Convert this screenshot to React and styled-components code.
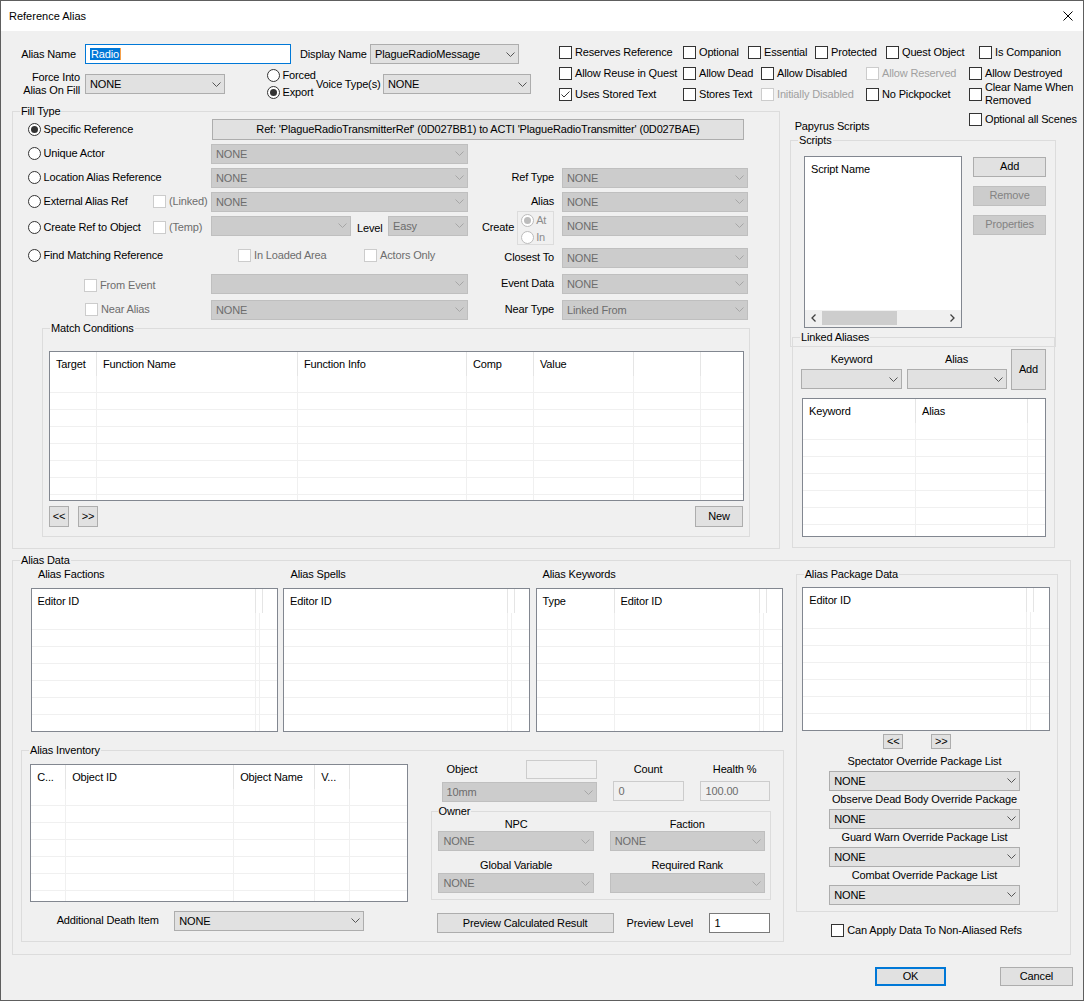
import React from 'react';
import styled, { createGlobalStyle } from 'styled-components';

const px = (v) => (v === undefined || v === null ? '0' : typeof v === 'number' ? `${v}px` : v);

const GlobalStyle = createGlobalStyle`
  html, body { margin: 0; padding: 0; background: #ffffff; }
  #root { width: 1084px; height: 1001px; }
`;

const Window = styled.div`
  width: 1084px;
  height: 1001px;
  box-sizing: border-box;
  border: 1px solid #5e5e5e;
  background: #f0f0f0;
  display: flex;
  flex-direction: column;
  font-family: "Liberation Sans", Arial, "DejaVu Sans", sans-serif;
  font-size: 11px;
  letter-spacing: -0.15px;
  color: #000;
  overflow: hidden;
`;

const TitleBar = styled.div`
  height: 30px;
  flex-shrink: 0;
  background: #ffffff;
  display: flex;
  align-items: center;
  justify-content: space-between;
  padding: 0 10px 0 8px;
`;

const TitleText = styled.span`
  letter-spacing: 0;
`;

const Body = styled.div`
  flex: 1;
  display: flex;
  flex-direction: column;
  padding: 0 12px 0 11px;
`;

const TopSection = styled.div`
  display: flex;
  height: 73.5px;
  flex-shrink: 0;
`;

const TopForm = styled.div`
  width: 519px;
  flex-shrink: 0;
  padding-top: 13px;
  box-sizing: border-box;
`;

const FormRow = styled.div`
  display: flex;
  align-items: center;
  height: ${(p) => p.$h}px;
  margin-top: ${(p) => px(p.$mt)};
`;

const FieldLabel = styled.div`
  width: ${(p) => (p.$w ? `${p.$w}px` : 'auto')};
  margin-left: ${(p) => px(p.$ml)};
  margin-top: ${(p) => px(p.$mt)};
  text-align: ${(p) => p.$align || 'right'};
  white-space: nowrap;
  flex-shrink: 0;
  line-height: 13px;
  color: ${(p) => (p.$disabled ? '#6d6d6d' : '#000')};
`;

const TextInput = styled.div`
  width: ${(p) => p.$w}px;
  height: 20px;
  margin-left: ${(p) => px(p.$ml)};
  box-sizing: border-box;
  flex-shrink: 0;
  border: 1px solid #0078d7;
  background: #ffffff;
  display: flex;
  align-items: center;
  padding-left: 4px;
`;

const Selection = styled.span`
  background: #0078d7;
  color: #ffffff;
  line-height: 12px;
  padding: 0 1px;
`;

const Caret = styled.span`
  width: 1px;
  height: 12px;
  background: #f5a04a;
`;

const TextBox = styled.div`
  width: ${(p) => p.$w}px;
  height: ${(p) => p.$h || 20}px;
  margin-left: ${(p) => px(p.$ml)};
  box-sizing: border-box;
  flex-shrink: 0;
  display: flex;
  align-items: center;
  padding-left: 5px;
  border: 1px solid ${(p) => (p.$disabled ? '#cccccc' : '#7a7a7a')};
  background: ${(p) => (p.$disabled ? '#f0f0f0' : '#ffffff')};
  color: ${(p) => (p.$disabled ? '#6d6d6d' : '#000')};
`;

const SelectBox = styled.div`
  width: ${(p) => p.$w}px;
  height: 20px;
  margin-left: ${(p) => px(p.$ml)};
  box-sizing: border-box;
  flex-shrink: 0;
  display: flex;
  align-items: center;
  padding-left: 4px;
  border: 1px solid ${(p) => (p.$disabled ? '#bfbfbf' : '#adadad')};
  background: ${(p) => (p.$disabled ? '#cccccc' : '#e1e1e1')};
  color: ${(p) => (p.$disabled ? '#6d6d6d' : '#000')};
  white-space: nowrap;
  overflow: hidden;
`;

const ChevronSvg = styled.svg`
  margin-left: auto;
  margin-right: 3px;
  flex-shrink: 0;
`;

const Btn = styled.button`
  font: inherit;
  letter-spacing: inherit;
  padding: 0;
  margin: 0;
  margin-left: ${(p) => px(p.$ml)};
  width: ${(p) => p.$w}px;
  height: ${(p) => p.$h || 20}px;
  box-sizing: border-box;
  flex-shrink: 0;
  border: 1px solid ${(p) => (p.$default ? '#0078d7' : '#adadad')};
  box-shadow: ${(p) => (p.$default ? 'inset 0 0 0 1px #0078d7' : 'none')};
  background: #e1e1e1;
  color: #000;
  display: flex;
  align-items: center;
  justify-content: center;
  white-space: nowrap;
  line-height: 13px;
  &:disabled {
    background: #cccccc;
    border-color: #bfbfbf;
    color: #838383;
  }
`;

const CheckItem = styled.div`
  display: flex;
  align-items: center;
  flex-shrink: 0;
  width: ${(p) => (p.$w ? `${p.$w}px` : 'auto')};
  margin-left: ${(p) => px(p.$ml)};
  margin-top: ${(p) => px(p.$mt)};
  white-space: nowrap;
`;

const Box = styled.span`
  width: 13px;
  height: 13px;
  box-sizing: border-box;
  flex-shrink: 0;
  border: 1px solid ${(p) => (p.$disabled ? '#cccccc' : '#333333')};
  background: #ffffff;
  display: flex;
  align-items: center;
  justify-content: center;
`;

const CheckText = styled.span`
  margin-left: 3px;
  line-height: 13px;
  color: ${(p) => (p.$dim ? '#a0a0a0' : p.$disabled ? '#6d6d6d' : '#000')};
`;

const RadioItem = styled.div`
  display: flex;
  align-items: center;
  white-space: nowrap;
`;

const Circle = styled.span`
  width: 13px;
  height: 13px;
  box-sizing: border-box;
  border-radius: 50%;
  flex-shrink: 0;
  border: 1px solid ${(p) => (p.$disabled ? '#bcbcbc' : '#333333')};
  background: #ffffff;
  display: flex;
  align-items: center;
  justify-content: center;
`;

const Dot = styled.span`
  width: 7px;
  height: 7px;
  border-radius: 50%;
  background: ${(p) => (p.$disabled ? '#bcbcbc' : '#333333')};
`;

const RadioText = styled.span`
  margin-left: 2.5px;
  line-height: 13px;
  color: ${(p) => (p.$disabled ? '#8c8c8c' : '#000')};
`;

const RadioStack = styled.div`
  display: flex;
  flex-direction: column;
  gap: 4px;
  width: ${(p) => p.$w}px;
  margin-left: ${(p) => px(p.$ml)};
  flex-shrink: 0;
`;

const CheckGrid = styled.div`
  margin-left: 28px;
  padding-top: 10.5px;
  display: flex;
  flex-direction: column;
`;

const CheckRow = styled.div`
  display: flex;
  align-items: center;
  height: 21px;
`;

const Middle = styled.div`
  display: flex;
  align-items: flex-start;
  gap: 10px;
  height: 444.5px;
  flex-shrink: 0;
`;

const Group = styled.fieldset`
  margin: 0;
  margin-top: ${(p) => px(p.$mt)};
  margin-left: ${(p) => px(p.$ml)};
  padding: 0;
  border: 1px solid #dcdcdc;
  min-width: 0;
  box-sizing: border-box;
  width: ${(p) => p.$w}px;
  flex-shrink: 0;
`;

const Legend = styled.legend`
  padding: 0 1px;
  margin-left: ${(p) => (p.$ml !== undefined ? p.$ml : 7)}px;
  line-height: 13px;
`;

const FillBody = styled.div`
  padding-bottom: 11px;
`;

const FillGrid = styled.div`
  display: grid;
  grid-template-columns: 15px 56px 69px 58px 257px 14px 72px 8px 186px;
  grid-template-rows: 24px 24px 24px 24px 28px 28px 28px 24px;
`;

const Cell = styled.div`
  grid-column: ${(p) => p.$c};
  grid-row: ${(p) => p.$r};
  display: flex;
  align-items: center;
  justify-content: ${(p) => p.$justify || 'flex-start'};
  align-self: ${(p) => (p.$top !== undefined ? 'start' : 'center')};
  margin-top: ${(p) => px(p.$top)};
  padding-left: ${(p) => px(p.$pl)};
  min-width: 0;
`;

const AtInBox = styled.div`
  width: 37px;
  height: 34px;
  box-sizing: border-box;
  margin-left: 1.7px;
  border: 1px solid #dcdcdc;
  display: flex;
  flex-direction: column;
  gap: 4px;
  padding: 2px 0 0 3px;
  flex-shrink: 0;
`;

const MatchBody = styled.div`
  padding: 16px 0 9px 6px;
`;

const ButtonRow = styled.div`
  display: flex;
  align-items: center;
  width: ${(p) => (p.$w ? `${p.$w}px` : 'auto')};
  margin-top: ${(p) => px(p.$mt)};
`;

/* list view */
const ListBox = styled.div`
  width: ${(p) => p.$w}px;
  height: ${(p) => p.$h}px;
  margin-left: ${(p) => px(p.$ml)};
  margin-top: ${(p) => px(p.$mt)};
  box-sizing: border-box;
  border: 1px solid #828790;
  background: #ffffff;
  overflow: hidden;
  flex-shrink: 0;
`;

const ListHeader = styled.div`
  display: flex;
  height: 24px;
`;

const HeadCell = styled.div`
  width: ${(p) => p.$w}px;
  flex-shrink: 0;
  box-sizing: border-box;
  padding-left: 6px;
  border-right: 1px solid #e5e5e5;
  line-height: 24px;
  white-space: nowrap;
  overflow: hidden;
`;

const ListRow = styled.div`
  display: flex;
  height: 17px;
  box-sizing: border-box;
  border-bottom: 1px solid #f0f0f0;
`;

const BodyCell = styled.div`
  width: ${(p) => p.$w}px;
  flex-shrink: 0;
  box-sizing: border-box;
  border-right: 1px solid #f0f0f0;
`;

/* papyrus column */
const PapyrusCol = styled.div`
  width: 267px;
  flex-shrink: 0;
  display: flex;
  flex-direction: column;
`;

const PapyrusHead = styled.div`
  display: flex;
  align-items: flex-start;
  height: 28px;
`;

const PlainLabel = styled.div`
  line-height: 13px;
  white-space: nowrap;
  margin-left: ${(p) => px(p.$ml)};
  margin-top: ${(p) => px(p.$mt)};
  padding-left: ${(p) => px(p.$pl)};
`;

const ScriptsBody = styled.div`
  display: flex;
  align-items: flex-start;
  padding: 9px 0 18.5px 13px;
`;

const ScriptList = styled.div`
  width: 158.4px;
  height: 172px;
  box-sizing: border-box;
  border: 1px solid #828790;
  background: #ffffff;
  display: flex;
  flex-direction: column;
`;

const ScriptHeader = styled.div`
  height: 24px;
  line-height: 24px;
  padding-left: 6px;
`;

const Spacer = styled.div`
  flex: 1;
`;

const HScroll = styled.div`
  height: 17px;
  background: #f0f0f0;
  display: flex;
  align-items: center;
`;

const ScrollArrow = styled.div`
  width: 17px;
  height: 17px;
  display: flex;
  align-items: center;
  justify-content: center;
  flex-shrink: 0;
`;

const Thumb = styled.div`
  width: 75px;
  height: 14px;
  background: #cdcdcd;
  flex-shrink: 0;
`;

const ScriptButtons = styled.div`
  display: flex;
  flex-direction: column;
  gap: 9px;
  margin-left: 11px;
  margin-top: 1.4px;
`;

const LinkedBody = styled.div`
  padding: 5.8px 0 10px 8px;
`;

const LinkedGrid = styled.div`
  display: grid;
  grid-template-columns: 101px 100px 35px;
  grid-template-rows: 20px 21px;
  column-gap: 4.5px;
`;

/* alias data */
const AliasDataBody = styled.div`
  display: flex;
  align-items: flex-start;
  padding: 0 0 12px 8px;
`;

const AliasLeft = styled.div`
  width: 764px;
  flex-shrink: 0;
  display: flex;
  flex-direction: column;
`;

const ListsRow = styled.div`
  display: flex;
  gap: 5.5px;
  margin-left: 9.6px;
`;

const ListCol = styled.div`
  display: flex;
  flex-direction: column;
  gap: 6.5px;
  padding-top: 1.5px;
`;

const InvBody = styled.div`
  display: flex;
  align-items: flex-start;
  padding: 2.5px 0 7.8px 8.2px;
`;

const InvLeft = styled.div`
  display: flex;
  flex-direction: column;
  padding-top: 5px;
  width: 377.6px;
  flex-shrink: 0;
`;

const DeathRow = styled.div`
  display: flex;
  align-items: center;
  height: 20px;
  margin-top: 9px;
`;

const InvRight = styled.div`
  display: flex;
  flex-direction: column;
  margin-left: 22.8px;
  width: 340.4px;
  flex-shrink: 0;
`;

const ObjGrid = styled.div`
  display: grid;
  grid-template-columns: 155px 71px 70px;
  grid-template-rows: 20px 21px;
  column-gap: 16px;
  row-gap: 2px;
  padding-left: 11px;
`;

const OwnerGrid = styled.div`
  display: grid;
  grid-template-columns: 155.6px 155px;
  grid-template-rows: 13px 20px 22px 20px;
  column-gap: 15.8px;
  padding: 0 0 6px 6.8px;
`;

const PreviewRow = styled.div`
  display: flex;
  align-items: center;
  height: 20px;
  margin-top: 13px;
`;

const AliasRight = styled.div`
  display: flex;
  flex-direction: column;
  margin-left: 10.7px;
  margin-top: 1px;
  width: 262.6px;
  flex-shrink: 0;
`;

const PackageBody = styled.div`
  padding: 6.8px 0 6.2px 5.6px;
`;

const OverrideCol = styled.div`
  margin-left: 27px;
  margin-top: 6px;
  width: 190.4px;
  display: flex;
  flex-direction: column;
  align-items: center;
  gap: 2.5px;
`;

const OverridePair = styled.div`
  display: flex;
  flex-direction: column;
  align-items: center;
  gap: 2.5px;
`;

const Footer = styled.div`
  display: flex;
  justify-content: flex-end;
  margin-top: 11.7px;
  margin-right: -1.7px;
`;

/* ---------- small building blocks ---------- */

function Chevron({ disabled }) {
  return (
    <ChevronSvg width="9" height="5" viewBox="0 0 9 5">
      <polyline
        points="0.5,0.5 4.5,4.5 8.5,0.5"
        fill="none"
        stroke={disabled ? '#a6a6a6' : '#555555'}
        strokeWidth="1"
      />
    </ChevronSvg>
  );
}

function Select({ w, ml, value = '', disabled }) {
  return (
    <SelectBox $w={w} $ml={ml} $disabled={disabled}>
      <span>{value}</span>
      <Chevron disabled={disabled} />
    </SelectBox>
  );
}

function Check({ label, checked, disabled, dim, w, ml, mt }) {
  return (
    <CheckItem $w={w} $ml={ml} $mt={mt}>
      <Box $disabled={disabled || dim}>
        {checked && (
          <svg width="11" height="11" viewBox="0 0 11 11">
            <polyline points="1.5,5.5 4,8 9.5,2.5" fill="none" stroke="#333333" strokeWidth="1" />
          </svg>
        )}
      </Box>
      <CheckText $disabled={disabled} $dim={dim}>
        {label}
      </CheckText>
    </CheckItem>
  );
}

function Radio({ label, checked, disabled }) {
  return (
    <RadioItem>
      <Circle $disabled={disabled}>{checked && <Dot $disabled={disabled} />}</Circle>
      <RadioText $disabled={disabled}>{label}</RadioText>
    </RadioItem>
  );
}

function ListView({ w, h, cols, ml, mt }) {
  const rows = Math.ceil((h - 2 - 24) / 17);
  return (
    <ListBox $w={w} $h={h} $ml={ml} $mt={mt}>
      <ListHeader>
        {cols.map((c, i) => (
          <HeadCell key={i} $w={c.w}>
            {c.label || ''}
          </HeadCell>
        ))}
      </ListHeader>
      {Array.from({ length: rows }).map((_, r) => (
        <ListRow key={r}>
          {cols.map((c, i) => (
            <BodyCell key={i} $w={c.w} />
          ))}
        </ListRow>
      ))}
    </ListBox>
  );
}

function CloseIcon() {
  return (
    <svg width="10" height="10" viewBox="0 0 10 10">
      <line x1="0.5" y1="0.5" x2="9.5" y2="9.5" stroke="#000" strokeWidth="1" />
      <line x1="9.5" y1="0.5" x2="0.5" y2="9.5" stroke="#000" strokeWidth="1" />
    </svg>
  );
}

const editorCols = [{ label: 'Editor ID', w: 224 }, { w: 4 }];

const overrides = [
  'Spectator Override Package List',
  'Observe Dead Body Override Package',
  'Guard Warn Override Package List',
  'Combat Override Package List',
];

export default function App() {
  return (
    <>
      <GlobalStyle />
      <Window>
        <TitleBar>
          <TitleText>Reference Alias</TitleText>
          <CloseIcon />
        </TitleBar>
        <Body>
          <TopSection>
            <TopForm>
              <FormRow $h={20}>
                <FieldLabel $w={64}>Alias Name</FieldLabel>
                <TextInput $w={206} $ml={9}>
                  <Selection>Radio</Selection>
                  <Caret />
                </TextInput>
                <FieldLabel $w={65} $ml={9} $align="left">
                  Display Name
                </FieldLabel>
                <Select w={149} ml={5} value="PlagueRadioMessage" />
              </FormRow>
              <FormRow $h={30} $mt={5}>
                <FieldLabel $w={68}>
                  Force Into
                  <br />
                  Alias On Fill
                </FieldLabel>
                <Select w={140} ml={5} value="NONE" />
                <RadioStack $ml={42} $w={49}>
                  <Radio label="Forced" />
                  <Radio label="Export" checked />
                </RadioStack>
                <FieldLabel $w={65} $align="left">
                  Voice Type(s)
                </FieldLabel>
                <Select w={148} ml={2} value="NONE" />
              </FormRow>
            </TopForm>
            <CheckGrid>
              <CheckRow>
                <Check w={124} label="Reserves Reference" />
                <Check w={65} label="Optional" />
                <Check w={67} label="Essential" />
                <Check w={71} label="Protected" />
                <Check w={93} label="Quest Object" />
                <Check label="Is Companion" />
              </CheckRow>
              <CheckRow>
                <Check w={124} label="Allow Reuse in Quest" />
                <Check w={78} label="Allow Dead" />
                <Check w={105} label="Allow Disabled" />
                <Check w={103} label="Allow Reserved" dim />
                <Check label="Allow Destroyed" />
              </CheckRow>
              <CheckRow>
                <Check w={124} label="Uses Stored Text" checked />
                <Check w={78} label="Stores Text" />
                <Check w={105} label="Initially Disabled" dim />
                <Check w={103} label="No Pickpocket" />
                <Check
                  label={
                    <>
                      Clear Name When
                      <br />
                      Removed
                    </>
                  }
                />
              </CheckRow>
            </CheckGrid>
          </TopSection>

          <Middle>
            <Group $w={768}>
              <Legend>Fill Type</Legend>
              <FillBody>
                <FillGrid>
                  <Cell $c="2 / 5" $r={1}>
                    <Radio label="Specific Reference" checked />
                  </Cell>
                  <Cell $c="5 / 10" $r={1} $pl={1}>
                    <Btn $w={532} $h={21}>
                      Ref: 'PlagueRadioTransmitterRef' (0D027BB1) to ACTI 'PlagueRadioTransmitter' (0D027BAE)
                    </Btn>
                  </Cell>

                  <Cell $c="2 / 5" $r={2}>
                    <Radio label="Unique Actor" />
                  </Cell>
                  <Cell $c="5" $r={2}>
                    <Select w={257} value="NONE" disabled />
                  </Cell>

                  <Cell $c="2 / 5" $r={3}>
                    <Radio label="Location Alias Reference" />
                  </Cell>
                  <Cell $c="5" $r={3}>
                    <Select w={257} value="NONE" disabled />
                  </Cell>
                  <Cell $c="7" $r={3} $justify="flex-end">
                    <FieldLabel>Ref Type</FieldLabel>
                  </Cell>
                  <Cell $c="9" $r={3}>
                    <Select w={186} value="NONE" disabled />
                  </Cell>

                  <Cell $c="2 / 4" $r={4}>
                    <Radio label="External Alias Ref" />
                  </Cell>
                  <Cell $c="4" $r={4}>
                    <Check label="(Linked)" disabled />
                  </Cell>
                  <Cell $c="5" $r={4}>
                    <Select w={257} value="NONE" disabled />
                  </Cell>
                  <Cell $c="7" $r={4} $justify="flex-end">
                    <FieldLabel>Alias</FieldLabel>
                  </Cell>
                  <Cell $c="9" $r={4}>
                    <Select w={186} value="NONE" disabled />
                  </Cell>

                  <Cell $c="2 / 4" $r={5}>
                    <Radio label="Create Ref to Object" />
                  </Cell>
                  <Cell $c="4" $r={5}>
                    <Check label="(Temp)" disabled />
                  </Cell>
                  <Cell $c="5" $r={5} $top={2}>
                    <Select w={140} disabled />
                    <FieldLabel $ml={6} $mt={5}>
                      Level
                    </FieldLabel>
                    <Select w={80} ml="auto" value="Easy" disabled />
                  </Cell>
                  <Cell $c="7 / 9" $r={5}>
                    <FieldLabel $w={33} $align="left">
                      Create
                    </FieldLabel>
                    <AtInBox>
                      <Radio label="At" checked disabled />
                      <Radio label="In" disabled />
                    </AtInBox>
                  </Cell>
                  <Cell $c="9" $r={5} $top={2}>
                    <Select w={186} value="NONE" disabled />
                  </Cell>

                  <Cell $c="2 / 5" $r={6}>
                    <Radio label="Find Matching Reference" />
                  </Cell>
                  <Cell $c="5" $r={6} $pl={27}>
                    <Check w={126} label="In Loaded Area" disabled />
                    <Check label="Actors Only" disabled />
                  </Cell>
                  <Cell $c="7" $r={6} $justify="flex-end" $top={9}>
                    <FieldLabel>Closest To</FieldLabel>
                  </Cell>
                  <Cell $c="9" $r={6} $top={6}>
                    <Select w={186} value="NONE" disabled />
                  </Cell>

                  <Cell $c="3 / 5" $r={7} $top={9}>
                    <Check label="From Event" disabled />
                  </Cell>
                  <Cell $c="5" $r={7}>
                    <Select w={257} disabled />
                  </Cell>
                  <Cell $c="7" $r={7} $justify="flex-end">
                    <FieldLabel>Event Data</FieldLabel>
                  </Cell>
                  <Cell $c="9" $r={7}>
                    <Select w={186} value="NONE" disabled />
                  </Cell>

                  <Cell $c="3 / 5" $r={8} $pl={1}>
                    <Check label="Near Alias" disabled />
                  </Cell>
                  <Cell $c="5" $r={8}>
                    <Select w={257} value="NONE" disabled />
                  </Cell>
                  <Cell $c="7" $r={8} $justify="flex-end">
                    <FieldLabel>Near Type</FieldLabel>
                  </Cell>
                  <Cell $c="9" $r={8}>
                    <Select w={186} value="Linked From" disabled />
                  </Cell>
                </FillGrid>

                <Group $w={708} $ml={29}>
                  <Legend>Match Conditions</Legend>
                  <MatchBody>
                    <ListView
                      w={695}
                      h={150}
                      cols={[
                        { label: 'Target', w: 47 },
                        { label: 'Function Name', w: 201 },
                        { label: 'Function Info', w: 169 },
                        { label: 'Comp', w: 67 },
                        { label: 'Value', w: 100 },
                        { label: '', w: 67 },
                      ]}
                    />
                    <ButtonRow $w={694} $mt={5}>
                      <Btn $w={20} $h={21}>&lt;&lt;</Btn>
                      <Btn $w={20} $h={21} $ml={9}>&gt;&gt;</Btn>
                      <Btn $w={48} $h={21} $ml="auto">New</Btn>
                    </ButtonRow>
                  </MatchBody>
                </Group>
              </FillBody>
            </Group>

            <PapyrusCol>
              <PapyrusHead>
                <PlainLabel $ml={4.7} $mt={15}>
                  Papyrus Scripts
                </PlainLabel>
                <Check w={88} ml="auto" mt={8} label="Optional all Scenes" />
              </PapyrusHead>
              <Group $w={266.4} $mt={1}>
                <Legend>Scripts</Legend>
                <ScriptsBody>
                  <ScriptList>
                    <ScriptHeader>Script Name</ScriptHeader>
                    <Spacer />
                    <HScroll>
                      <ScrollArrow>
                        <svg width="5" height="8" viewBox="0 0 5 8">
                          <polyline points="4.5,0.5 1,4 4.5,7.5" fill="none" stroke="#404040" strokeWidth="1.3" />
                        </svg>
                      </ScrollArrow>
                      <Thumb />
                      <Spacer />
                      <ScrollArrow>
                        <svg width="5" height="8" viewBox="0 0 5 8">
                          <polyline points="0.5,0.5 4,4 0.5,7.5" fill="none" stroke="#404040" strokeWidth="1.3" />
                        </svg>
                      </ScrollArrow>
                    </HScroll>
                  </ScriptList>
                  <ScriptButtons>
                    <Btn $w={72.4}>Add</Btn>
                    <Btn $w={72.4} disabled>
                      Remove
                    </Btn>
                    <Btn $w={72.4} disabled>
                      Properties
                    </Btn>
                  </ScriptButtons>
                </ScriptsBody>
              </Group>
              <Group $w={263.4} $mt={-16.5} $ml={2}>
                <Legend>Linked Aliases</Legend>
                <LinkedBody>
                  <LinkedGrid>
                    <Cell $c="1" $r={1} $justify="center">
                      <FieldLabel>Keyword</FieldLabel>
                    </Cell>
                    <Cell $c="2" $r={1} $justify="center">
                      <FieldLabel>Alias</FieldLabel>
                    </Cell>
                    <Cell $c="1" $r={2} $top={0}>
                      <Select w={101} />
                    </Cell>
                    <Cell $c="2" $r={2} $top={0}>
                      <Select w={100} />
                    </Cell>
                    <Cell $c="3" $r="1 / 3">
                      <Btn $w={35} $h={41}>
                        Add
                      </Btn>
                    </Cell>
                  </LinkedGrid>
                  <ListView
                    w={244.4}
                    h={139}
                    ml={1}
                    mt={8}
                    cols={[
                      { label: 'Keyword', w: 113 },
                      { label: 'Alias', w: 112 },
                    ]}
                  />
                </LinkedBody>
              </Group>
            </PapyrusCol>
          </Middle>

          <Group $w={1059} $mt={4.5}>
            <Legend>Alias Data</Legend>
            <AliasDataBody>
              <AliasLeft>
                <ListsRow>
                  <ListCol>
                    <PlainLabel $pl={7.5}>Alias Factions</PlainLabel>
                    <ListView w={247} h={144.5} cols={editorCols} />
                  </ListCol>
                  <ListCol>
                    <PlainLabel $pl={7.5}>Alias Spells</PlainLabel>
                    <ListView w={247} h={144.5} cols={editorCols} />
                  </ListCol>
                  <ListCol>
                    <PlainLabel $pl={7}>Alias Keywords</PlainLabel>
                    <ListView
                      w={247}
                      h={144.5}
                      cols={[
                        { label: 'Type', w: 78 },
                        { label: 'Editor ID', w: 145 },
                        { w: 4 },
                      ]}
                    />
                  </ListCol>
                </ListsRow>

                <Group $w={763.3} $mt={11.5}>
                  <Legend>Alias Inventory</Legend>
                  <InvBody>
                    <InvLeft>
                      <ListView
                        w={377.6}
                        h={137.7}
                        cols={[
                          { label: 'C...', w: 35 },
                          { label: 'Object ID', w: 168 },
                          { label: 'Object Name', w: 81 },
                          { label: 'V...', w: 35 },
                        ]}
                      />
                      <DeathRow>
                        <FieldLabel $ml={26.5} $w={104} $align="left">
                          Additional Death Item
                        </FieldLabel>
                        <Select w={190} ml={13.5} value="NONE" />
                      </DeathRow>
                    </InvLeft>
                    <InvRight>
                      <ObjGrid>
                        <Cell $c="1" $r={1}>
                          <FieldLabel $ml={5}>Object</FieldLabel>
                          <TextBox $w={70.4} $h={19} $ml="auto" $disabled />
                        </Cell>
                        <Cell $c="2" $r={1} $justify="center">
                          <FieldLabel>Count</FieldLabel>
                        </Cell>
                        <Cell $c="3" $r={1} $justify="center">
                          <FieldLabel>Health %</FieldLabel>
                        </Cell>
                        <Cell $c="1" $r={2} $top={1}>
                          <Select w={155} value="10mm" disabled />
                        </Cell>
                        <Cell $c="2" $r={2} $top={0}>
                          <TextBox $w={71} $disabled>
                            0
                          </TextBox>
                        </Cell>
                        <Cell $c="3" $r={2} $top={0}>
                          <TextBox $w={70} $disabled>
                            100.00
                          </TextBox>
                        </Cell>
                      </ObjGrid>
                      <Group $w={340.4} $mt={3.2}>
                        <Legend $ml={6}>Owner</Legend>
                        <OwnerGrid>
                          <Cell $c="1" $r={1} $justify="center">
                            <FieldLabel>NPC</FieldLabel>
                          </Cell>
                          <Cell $c="2" $r={1} $justify="center">
                            <FieldLabel>Faction</FieldLabel>
                          </Cell>
                          <Cell $c="1" $r={2}>
                            <Select w={155.6} value="NONE" disabled />
                          </Cell>
                          <Cell $c="2" $r={2}>
                            <Select w={155} value="NONE" disabled />
                          </Cell>
                          <Cell $c="1" $r={3} $justify="center" $top={7.5}>
                            <FieldLabel>Global Variable</FieldLabel>
                          </Cell>
                          <Cell $c="2" $r={3} $justify="center" $top={7.5}>
                            <FieldLabel>Required Rank</FieldLabel>
                          </Cell>
                          <Cell $c="1" $r={4}>
                            <Select w={155.6} value="NONE" disabled />
                          </Cell>
                          <Cell $c="2" $r={4}>
                            <Select w={155} disabled />
                          </Cell>
                        </OwnerGrid>
                      </Group>
                      <PreviewRow>
                        <Btn $w={177} $ml={6}>
                          Preview Calculated Result
                        </Btn>
                        <FieldLabel $ml={13} $w={67} $align="left">
                          Preview Level
                        </FieldLabel>
                        <TextBox $w={61.4} $ml={15}>
                          1
                        </TextBox>
                      </PreviewRow>
                    </InvRight>
                  </InvBody>
                </Group>
              </AliasLeft>

              <AliasRight>
                <Group $w={262.6}>
                  <Legend>Alias Package Data</Legend>
                  <PackageBody>
                    <ListView w={247.4} h={144} cols={editorCols} />
                    <ButtonRow $mt={3}>
                      <Btn $w={20} $h={15} $ml={81}>
                        &lt;&lt;
                      </Btn>
                      <Btn $w={20} $h={15} $ml={28}>
                        &gt;&gt;
                      </Btn>
                    </ButtonRow>
                    <OverrideCol>
                      {overrides.map((o) => (
                        <OverridePair key={o}>
                          <PlainLabel>{o}</PlainLabel>
                          <Select w={190.4} value="NONE" />
                        </OverridePair>
                      ))}
                    </OverrideCol>
                  </PackageBody>
                </Group>
                <Check ml={35.6} mt={12.3} label="Can Apply Data To Non-Aliased Refs" />
              </AliasRight>
            </AliasDataBody>
          </Group>

          <Footer>
            <Btn $w={71.6} $h={19.5} $default>
              OK
            </Btn>
            <Btn $w={72.4} $h={19.5} $ml={54}>
              Cancel
            </Btn>
          </Footer>
        </Body>
      </Window>
    </>
  );
}
